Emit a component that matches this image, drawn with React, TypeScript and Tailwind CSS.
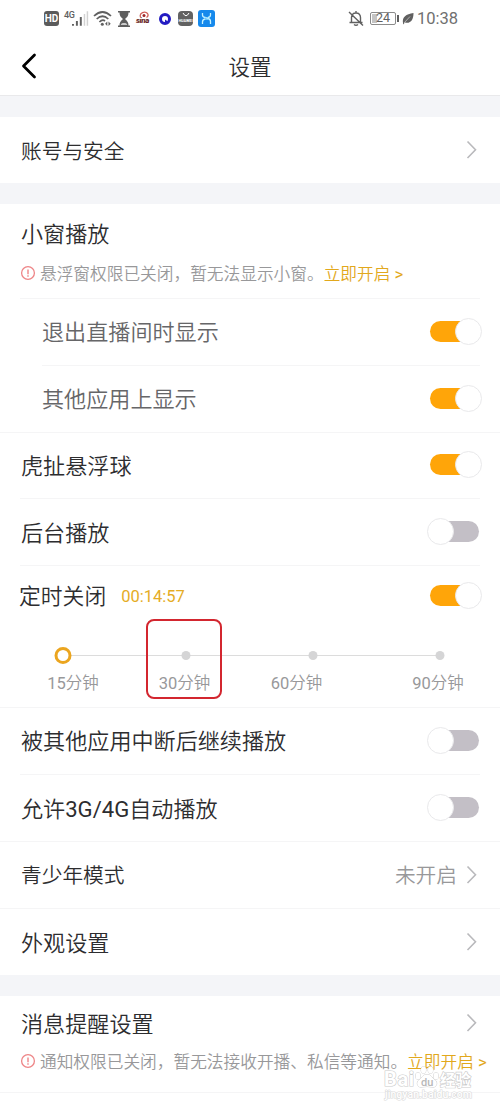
import React from 'react';
import { ChevronLeft } from 'lucide-react';

const Divider = ({ inset = 'ml-5 mr-5' }: { inset?: string }) => (
    <div className={`h-px bg-[#f5f5f6] ${inset}`} />
);

const Arrow = () => (
    <svg width="12" height="20" viewBox="0 0 12 20" fill="none" stroke="#b9b9bc" strokeWidth="1.6" className="mr-1 shrink-0">
        <path d="M2.500 1.500 10.500 9.800 2.500 18" />
    </svg>
);

const Toggle = ({ on }: { on: boolean }) => (
    <div className="relative -mt-px h-7 w-[54px] shrink-0">
        <div className={`absolute top-[3px] h-[21px] rounded-full ${on ? 'left-[3px] w-[44px] bg-[#ffa509]' : 'right-0.5 w-[44px] bg-[#c3bfc6]'}`} />
        <div className={`absolute top-0 size-[27px] rounded-full border border-[#e9e9eb] bg-white ${on ? '-right-px' : 'left-0'}`} />
    </div>
);

interface RowProps {
    label: React.ReactNode;
    size?: string;
    tone?: string;
    pad?: string;
    height?: string;
    children: React.ReactNode;
}

const Row = ({ label, size = 'text-[22.1px]', tone = 'text-[#2d2d2f]', pad = 'pl-[21px]', height = 'h-[66px]', children }: RowProps) => (
    <div className={`flex items-center justify-between pr-[19px] ${height} ${pad}`}>
        <span className={`leading-8 ${size} ${tone}`}>{label}</span>
        {children}
    </div>
);

const Notice = ({ text }: { text: string }) => (
    <div className="flex h-6 items-center whitespace-nowrap pl-5 text-[16.7px] leading-6 text-[#98989a]">
        <svg width="16" height="16" viewBox="0 0 16 16" fill="none" stroke="#ee8587" className="mb-1 mr-1 shrink-0">
            <circle cx="8" cy="8" r="6.4" strokeWidth="1.3" />
            <path d="M8 4.5v4.8M8 10.3v1.4" strokeWidth="1.4" />
        </svg>
        <span>{text}</span>
        <span className="text-[#e2a81c]">立即开启 <span className="font-normal">&gt;</span></span>
    </div>
);

const StatusBar = () => (
    <div className="flex h-9 items-center justify-between pl-11 pr-[42px] pt-px text-[#606060]">
        <div className="flex items-center">
            <span className="flex h-[15px] w-[15px] items-center justify-center rounded-[3px] bg-[#5b5b5b] text-[10px] font-bold leading-none text-white">HD</span>
            <div className="ml-[5px] flex h-[18px] w-[25px]">
                <span className="-mt-0.5 text-[9px] font-medium leading-[14px] tracking-tighter">4G</span>
                <svg width="17" height="18" viewBox="0 0 17 18" className="-ml-0.5">
                    <path d="M0 14h2v2H0zM4 11h2v5H4zM8 7h2v9H8z" fill="#606060" />
                    <path d="M12 4h1.500v12H12zM15 1h1.500v15H15z" fill="#d2d2d2" />
                </svg>
            </div>
            <svg width="19" height="17" viewBox="0 0 19 17" fill="none" stroke="#606060" strokeWidth="1.7" className="ml-1">
                <path d="M1 6Q9.5-2 18 6M3.7 9Q9.5 3.5 15.3 9M6.4 12Q9.5 9 12 11" />
                <circle cx="9.3" cy="14.2" r="1.5" fill="#606060" stroke="none" />
                <path d="m14.3 11.5-2.2 2.3 2.2 2.2zM15.5 11.5l2.2 2.3-2.2 2.2z" fill="#606060" stroke="none" />
            </svg>
            <svg width="12" height="16" viewBox="0 0 12 16" fill="#5f5f5f" className="ml-[6px]">
                <path d="M0 0h12v1.500H0zM0 14.500h12V16H0zM1.500 1.500h9c0 3-1 4.500-3.500 6.500 2.500 2 3.500 3.500 3.500 6.500h-9c0-3 1-4.500 3.500-6.500-2.500-2-3.500-3.500-3.500-6.500" />
                <path d="M2.800 14c.2-1.500 1.200-2 3.200-2s3 .5 3.200 2z" fill="#ccc" />
            </svg>
            <div className="relative ml-[7px] h-4 w-[15px]">
                <svg width="15" height="9" viewBox="0 0 15 9" fill="none" className="absolute left-0 top-0">
                    <path d="M3.500 6C2 2 8-.5 10.500 2.500c1 1.500.5 3-1 4" stroke="#d0605c" strokeWidth="1.300" />
                    <circle cx="7" cy="4.500" r="1.500" fill="#9e2526" />
                </svg>
                <span className="absolute -left-px top-[5px] text-[8px] font-black italic leading-[9px] tracking-tighter text-[#6a2a2a]">sina</span>
            </div>
            <svg width="14" height="14" viewBox="0 0 14 14" fill="none" className="ml-[6px]">
                <circle cx="7" cy="7" r="4.500" stroke="#231bc2" strokeWidth="3" />
                <path d="M7 7.500V11l3-1.500z" fill="#231bc2" />
            </svg>
            <div className="relative ml-[6px] flex h-[15px] w-[15px] items-end justify-center overflow-hidden rounded-[4px] bg-[#626262] pb-[3px]">
                <svg width="8" height="4" viewBox="0 0 8 4" fill="none" stroke="#fff" className="absolute left-[3.5px] top-[2px]">
                    <path d="M1 0Q4 5.500 7 0" />
                </svg>
                <span className="text-[3.800px] font-bold leading-[5px] text-white">HUAWEI</span>
            </div>
            <svg width="17" height="17" viewBox="0 0 17 17" fill="none" className="ml-[5px]">
                <rect width="17" height="17" rx="3" fill="#1689ec" />
                <path d="M4.500 3v2Q4.500 7 7 7.500q2 .5 3 1 2.500.5 2.500 3V14M12.500 3v2Q12.500 7 10 7.500M4.500 14v-2Q4.500 9.500 7 9" stroke="#c5f2ff" strokeWidth="1.300" />
                <path d="M7 7.500h3v2H7z" stroke="#8fdcff" strokeWidth=".7" />
            </svg>
        </div>
        <div className="flex items-center">
            <svg width="16" height="17" viewBox="0 0 16 17" fill="none" stroke="#606060" strokeWidth="1.400">
                <path d="M3.500 12V7.500C3.500 4.500 5 3 8 3s4.500 1.500 4.500 4.500V12M1.500 12.500h13M8 1v2M6 14.500q2 1.500 4 0M1 2l14 13.500" />
            </svg>
            <div className="relative ml-[6px] flex h-[13px] w-[26px] items-center justify-center rounded-[2px] border border-[#8b8b8b] text-[12.5px] font-normal leading-none">
                <div className="absolute left-px top-px h-[9px] w-[5px] bg-[#c4c4c4]" />
                <span className="relative">24</span>
            </div>
            <div className="ml-px h-[7px] w-[2px] bg-[#606060]" />
            <svg width="12" height="13" viewBox="0 0 12 13" className="ml-[3px]">
                <path d="M1 11C0 5 4 2 11.500 1c0 7-3 11-8.500 9.500L1 12.500z" fill="#606060" />
                <path d="M2 11 8 4.500" stroke="#fff" strokeWidth=".5" />
            </svg>
            <span className="ml-[3px] text-[16.500px] font-normal leading-5 text-[#707070]">10:38</span>
        </div>
    </div>
);

const stops = [
    { minutes: 15, left: 'left-[63px]', text: 'left-[73px]' },
    { minutes: 30, left: 'left-[186px]', text: 'left-[184.5px]' },
    { minutes: 60, left: 'left-[313px]', text: 'left-[296.5px]' },
    { minutes: 90, left: 'left-[440px]', text: 'left-[438px]' },
];

// Sleep timer track, with the 30 minute stop outlined
const TimerSlider = () => (
    <div className="relative h-[80px]">
        <div className="absolute left-[63px] top-[29px] h-px w-[377px] bg-[#dcdcdc]" />
        {stops.map((stop, i) => (
            <React.Fragment key={stop.minutes}>
                <div
                    className={`absolute -translate-x-1/2 rounded-full ${stop.left} ${i === 0 ? 'top-[21px] size-[17px] border-[3px] border-[#eba51f] bg-white' : 'top-[25px] size-[9px] bg-[#d5d5d6]'}`}
                />
                <span className={`absolute top-[46px] -translate-x-1/2 whitespace-nowrap text-[16.500px] leading-6 text-[#98989a] ${stop.text}`}>
                    <span className="font-normal">{stop.minutes}</span>分钟
                </span>
            </React.Fragment>
        ))}
        <div className="absolute left-[146px] top-[-7px] h-[80px] w-[76px] rounded-[8px] border-2 border-[#d3262f]" />
    </div>
);

const Watermark = () => (
    <svg width="92" height="38" viewBox="0 0 92 38" className="absolute left-[383px] top-[1063px]" fill="#fff" stroke="#cbcbcb" strokeWidth="1.200" paintOrder="stroke">
        <text x="1" y="23" fontSize="20" fontWeight="700" textLength="30">Bai</text>
        <g strokeWidth="1">
            <ellipse cx="35" cy="13" rx="2.500" ry="3.500" />
            <ellipse cx="40.500" cy="7" rx="2.500" ry="3.500" />
            <ellipse cx="47.500" cy="7" rx="2.500" ry="3.500" />
            <ellipse cx="53" cy="13" rx="2.500" ry="3.500" />
            <path d="M44 11.500c4 0 5 3.500 8 5.500s2 8-3 7q-5-1-10 0c-5 1-6-5-3-7s4-5.500 8-5.500" />
        </g>
        <text x="38" y="22.500" fontSize="11" fontWeight="500" fill="#b8b8b8" stroke="none">du</text>
        <text x="57" y="23" fontSize="15.500" fontWeight="700">经验</text>
        <text x="2" y="34.500" fontSize="10.500" fontWeight="500" textLength="87" stroke="#dadada">jingyan.baidu.com</text>
    </svg>
);

export default function App() {
    return (
        <div className="relative h-[1111px] w-[500px] overflow-hidden bg-white font-['Roboto','Noto_Sans_CJK_SC',sans-serif] font-[350]">
            <StatusBar />
            <header className="relative flex h-[60px] items-center justify-center border-b border-[#e9e9eb]">
                <ChevronLeft className="absolute left-[7px] top-[8px] text-black" size={44} strokeWidth={1.5} />
                <h1 className="pt-[5px] text-[21.5px] leading-8 text-[#2d2d2f]">设置</h1>
            </header>
            <div className="h-[21px] bg-[#f4f5f8]" />
            <Row label="账号与安全" size="pt-1 text-[20.7px]"><Arrow /></Row>
            <div className="h-[21px] bg-[#f4f5f8]" />

            <section>
                <div className="h-[94px] pt-[14px]">
                    <h2 className="mb-[13px] pl-[21px] text-[22.1px] leading-8 text-[#2d2d2f]">小窗播放</h2>
                    <Notice text="悬浮窗权限已关闭，暂无法显示小窗。" />
                </div>
                <Divider />
                <Row label="退出直播间时显示" tone="text-[#666668]" pad="pl-[42px]"><Toggle on /></Row>
                <Divider inset="ml-[42px] mr-5" />
                <Row label="其他应用上显示" tone="text-[#666668]" pad="pl-[42px]"><Toggle on /></Row>
                <Divider inset="" />
                <Row label="虎扯悬浮球" height="h-[65px]"><Toggle on /></Row>
                <Divider />
                <Row label="后台播放" size="pt-0.5 text-[22.1px]"><Toggle on={false} /></Row>
                <Divider />
                <div className="flex h-[60px] items-center justify-between pl-[19px] pr-[19px]">
                    <div className="flex items-center pt-0.5">
                        <span className="text-[21.8px] leading-8 text-[#2d2d2f]">定时关闭</span>
                        <span className="ml-[15px] text-[16.500px] font-normal leading-6 text-[#e5ac25]">00:14:57</span>
                    </div>
                    <Toggle on />
                </div>
                <TimerSlider />
                <div className="h-px" />
                <Divider inset="" />
                <Row label="被其他应用中断后继续播放"><Toggle on={false} /></Row>
                <Divider />
                <Row label={<>允许<span className="font-normal">3G/4G</span>自动播放</>} size="text-[22.1px] pt-0.5"><Toggle on={false} /></Row>
                <Divider inset="" />
                <Row label="青少年模式" size="pt-0.5 text-[20.7px]">
                    <div className="flex items-center gap-[8px]">
                        <span className="pt-0.5 text-[20.700px] leading-8 text-[#98989a]">未开启</span>
                        <Arrow />
                    </div>
                </Row>
                <Divider inset="" />
                <Row label="外观设置" size="pt-0.5 text-[22.1px]"><Arrow /></Row>
            </section>
            <div className="h-[21px] bg-[#f4f5f8]" />

            <section>
                <div className="flex h-[54px] items-center justify-between pl-[21px] pr-[19px]">
                    <h2 className="pt-0.5 text-[22.1px] leading-8 text-[#2d2d2f]">消息提醒设置</h2>
                    <Arrow />
                </div>
                <div className="h-[42px] pt-px">
                    <Notice text="通知权限已关闭，暂无法接收开播、私信等通知。" />
                </div>
                <Divider inset="" />
            </section>
            <Watermark />
        </div>
    );
}
